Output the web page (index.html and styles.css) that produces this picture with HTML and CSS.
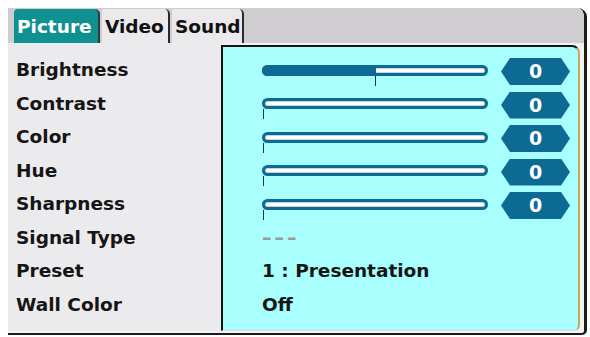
FILE: index.html
```html
<!DOCTYPE html>
<html>
<head>
<meta charset="utf-8">
<link rel="stylesheet" href="styles.css">
</head>
<body>
<div class="menu">
  <div class="tabbar">
    <div class="tab active">Picture</div>
    <div class="tab">Video</div>
    <div class="tab">Sound</div>
  </div>
  <div class="body">
    <div class="labels">
      <div class="row">Brightness</div>
      <div class="row">Contrast</div>
      <div class="row">Color</div>
      <div class="row">Hue</div>
      <div class="row">Sharpness</div>
      <div class="row">Signal Type</div>
      <div class="row">Preset</div>
      <div class="row">Wall Color</div>
    </div>
    <div class="panel">
      <div class="row">
        <div class="slider"><div class="fill" style="width:114px"></div><div class="tick" style="left:113px"></div></div>
        <div class="badge">0</div>
      </div>
      <div class="row">
        <div class="slider"><div class="tick" style="left:1px"></div></div>
        <div class="badge">0</div>
      </div>
      <div class="row">
        <div class="slider"><div class="tick" style="left:1px"></div></div>
        <div class="badge">0</div>
      </div>
      <div class="row">
        <div class="slider"><div class="tick" style="left:1px"></div></div>
        <div class="badge">0</div>
      </div>
      <div class="row">
        <div class="slider"><div class="tick" style="left:1px"></div></div>
        <div class="badge">0</div>
      </div>
      <div class="row"><span class="dashes">–––</span></div>
      <div class="row">1 : Presentation</div>
      <div class="row">Off</div>
    </div>
  </div>
</div>
</body>
</html>
```
FILE: styles.css
```css
html, body {
  margin: 0;
  padding: 0;
  background: #ffffff;
}
body {
  font-family: "DejaVu Sans", "Liberation Sans", sans-serif;
  font-weight: bold;
  font-size: 18.5px;
  color: #151515;
}
.menu {
  margin: 8px 0 0 8px;
  width: 576px;
  border-right: 3px solid #1b1b1b;
  border-bottom: 2px solid #1b1b1b;
  border-top-right-radius: 9px;
  border-bottom-right-radius: 5px;
  background: #f4f4f4;
  padding-bottom: 2px;
  overflow: hidden;
}
.tabbar {
  height: 35px;
  background: #cfcdd0;
  display: flex;
  align-items: flex-end;
  gap: 2px;
  padding-left: 6px;
  box-sizing: border-box;
}
.tab {
  height: 34px;
  line-height: 36px;
  background: #ebe9ec;
  border-right: 2px solid #2a2a2a;
  border-top-right-radius: 5px;
  border-top-left-radius: 2px;
  box-sizing: border-box;
  padding-left: 3px;
  color: #111;
}
.tab.active {
  width: 86px;
  background: #0f9191;
  color: #ffffff;
  border-right-color: #2f3a3a;
  border-top-left-radius: 4px;
}
.tab:nth-child(2) { width: 68px; }
.tab:nth-child(3) { width: 72px; }
.body {
  display: flex;
  height: 288px;
  padding-right: 4px;
  background: #f2f2f2;
}
.labels {
  width: 213px;
  background: #ebeaed;
  padding-top: 10.25px;
  padding-left: 8px;
  box-sizing: border-box;
}
.row {
  height: 33.5px;
  line-height: 33.5px;
  display: flex;
  align-items: center;
  white-space: nowrap;
}
.panel {
  flex: 1;
  margin-top: 2px;
  background: #a9fefe;
  border-left: 2px solid #141414;
  border-top: 2px solid #141414;
  border-right: 2px solid #c4a865;
  border-top-right-radius: 8px;
  border-bottom-right-radius: 6px;
  border-bottom: 1px solid #d8d8d8;
  padding-top: 6.25px;
  padding-left: 39px;
  box-sizing: border-box;
}
.slider {
  position: relative;
  width: 226px;
  height: 11px;
  border-radius: 5.5px;
  background: #0d6a92;
  box-sizing: border-box;
  margin-right: 13px;
}
.slider::before {
  content: "";
  position: absolute;
  left: 4px;
  right: 4px;
  top: 4px;
  height: 3px;
  border-radius: 1.5px;
  background: #ffffff;
  box-shadow: 0 0 0 1px #c9d3d6;
}
.fill {
  position: absolute;
  left: 0;
  top: 0;
  height: 11px;
  background: #0d6a92;
  border-radius: 5.5px 0 0 5.5px;
  z-index: 1;
}
.tick {
  position: absolute;
  top: 11px;
  width: 1px;
  height: 10px;
  background: #1c3440;
}
.badge {
  width: 69px;
  height: 27px;
  line-height: 27px;
  margin-top: 3px;
  background: #0d6a92;
  color: #ffffff;
  font-size: 19px;
  text-align: center;
  clip-path: polygon(9px 0, 60px 0, 69px 50%, 60px 100%, 9px 100%, 0 50%);
}
.dashes {
  color: #9a9a9a;
  letter-spacing: 3px;
  font-size: 19px;
}
```
